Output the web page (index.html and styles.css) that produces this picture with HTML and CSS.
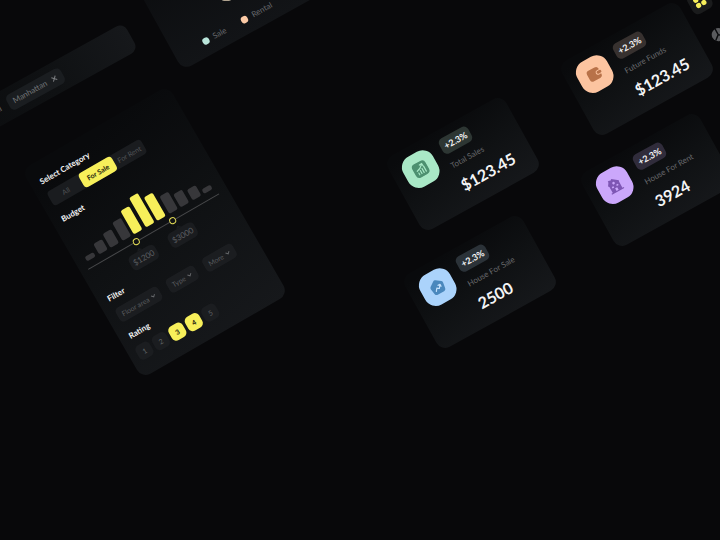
FILE: index.html
```html
<!DOCTYPE html>
<html lang="en">
<head>
<meta charset="utf-8">
<title>Real estate dashboard</title>
<link rel="stylesheet" href="styles.css">
</head>
<body>
<main class="canvas">

  <section class="tile search" aria-label="Locations">
    <span class="search-rest">al</span>
    <button class="chip" type="button">Manhattan
      <svg class="cross" viewBox="0 0 8 8" aria-hidden="true"><path d="M1.5 1.5l5 5M6.5 1.5l-5 5"/></svg>
    </button>
  </section>

  <section class="tile share" aria-label="Sales share">
    <svg class="donut" viewBox="0 0 50 50" aria-hidden="true">
      <circle cx="25" cy="25" r="20" stroke="#b9e5da"/>
      <path d="M5 25A20 20 0 0 0 45 25" stroke="#fbc9a5"/>
    </svg>
    <ul class="legend">
      <li><i class="dot mint"></i>Sale</li>
      <li><i class="dot peach"></i>Rental</li>
    </ul>
  </section>

  <form class="tile filters">
    <section class="group">
      <h2>Select Category</h2>
      <div class="tabs">
        <button type="button">All</button>
        <button type="button" class="on">For Sale</button>
        <button type="button">For Rent</button>
      </div>
    </section>
    <section class="group spaced">
      <h2>Budget</h2>
      <div class="budget">
        <div class="bars">
          <i style="height:5px"></i><i style="height:12px"></i><i style="height:16px"></i><i style="height:21px"></i>
          <i class="on" style="height:27px"></i><i class="on" style="height:34px"></i><i class="on" style="height:27px"></i>
          <i style="height:20px"></i><i style="height:15px"></i><i style="height:12px"></i><i style="height:5px"></i>
        </div>
        <div class="slider">
          <input type="range" aria-label="Lowest price" min="0" max="100" value="36">
          <input type="range" aria-label="Highest price" min="0" max="100" value="65">
        </div>
        <div class="prices"><output>$1200</output><output>$3000</output></div>
      </div>
    </section>
    <section class="group">
      <h2>Filter</h2>
      <div class="selects">
        <select aria-label="Floor area"><option>Floor area</option></select>
        <select aria-label="Type"><option>Type</option></select>
        <select aria-label="More"><option>More</option></select>
      </div>
    </section>
    <section class="group spaced">
      <h2>Rating</h2>
      <div class="rating">
        <button type="button">1</button>
        <button type="button">2</button>
        <button type="button" class="on">3</button>
        <button type="button" class="on">4</button>
        <button type="button">5</button>
      </div>
    </section>
  </form>

  <article class="tile stat sales">
    <div class="badge-icon">
      <svg viewBox="0 0 16 16" aria-hidden="true"><rect x="0.500" y="0.500" width="15" height="15" rx="4" fill="#4d9070"/><path d="M4.500 12.500v-2M7 12.500v-3.500M9.500 12.500v-4.500M12 12.500V7M4 8.200Q8 7.500 11 4.200M8.800 3.800l2.700-.2.200 2.600" fill="none" stroke="#a9e8c6" stroke-width="1.200" stroke-linecap="round"/></svg>
    </div>
    <div class="facts"><span class="delta">+2.3%</span><h3>Total Sales</h3><strong>$123.45</strong></div>
  </article>

  <article class="tile stat for-sale">
    <div class="badge-icon">
      <svg viewBox="0 0 16 16" aria-hidden="true"><path d="M6.600 1a2.200 2.200 0 0 1 2.800 0l4.800 3.500a2.300 2.300 0 0 1 .8 2.200l-1 6a2.500 2.500 0 0 1-2.400 2H4.400a2.500 2.500 0 0 1-2.400-2l-1-6a2.300 2.300 0 0 1 .8-2.200z" fill="#4a88bd"/><path d="M4.800 11l2-2.600 2 1.600 2.400-3.200M9.200 6.600h2.200v2.200" fill="none" stroke="#c4e1fc" stroke-width="1.200" stroke-linecap="round" stroke-linejoin="round"/></svg>
    </div>
    <div class="facts"><span class="delta">+2.3%</span><h3>House For Sale</h3><strong>2500</strong></div>
  </article>

  <article class="tile stat funds">
    <div class="badge-icon">
      <svg viewBox="0 0 16 16" aria-hidden="true"><path d="M4 2h7a3 3 0 0 1 3 3v.6h-2.200a2.400 2.400 0 0 0 0 4.800H14v.6a3 3 0 0 1-3 3H4a3 3 0 0 1-3-3V5a3 3 0 0 1 3-3z" fill="#b87249"/><rect x="10.400" y="6.500" width="5" height="3" rx="1.400" fill="#b87249"/></svg>
    </div>
    <div class="facts"><span class="delta">+2.3%</span><h3>Future Funds</h3><strong>$123.45</strong></div>
  </article>

  <article class="tile stat for-rent">
    <div class="badge-icon">
      <svg viewBox="0 0 16 16" aria-hidden="true"><path d="M2.500 14V7L1.500 6l2.200-3.200V1.500h2v.9L8 1l6 4.800L13.500 7v7h1.500v1.200H1V14z" fill="#7e56b4"/><circle cx="8" cy="5.600" r="1.300" fill="#cba7fb"/><path d="M6.800 14v-3h2.400v3zM4.500 8.300h2v1.500h-2zM9.500 8.300h2v1.500h-2z" fill="#cba7fb"/></svg>
    </div>
    <div class="facts"><span class="delta">+2.3%</span><h3>House For Rent</h3><strong>3924</strong></div>
  </article>

  <nav class="tile side" aria-label="Sections">
    <a href="#home" class="current" aria-label="Home"><svg viewBox="0 0 14 14" aria-hidden="true"><g fill="#f7ef5a"><circle cx="4" cy="4" r="2.600"/><circle cx="10" cy="4" r="2.600"/><circle cx="4" cy="10" r="2.600"/><circle cx="10" cy="10" r="2.600"/></g></svg></a>
    <a href="#reports" aria-label="Reports"><svg viewBox="0 0 14 14" aria-hidden="true"><circle cx="7" cy="7" r="6.500" fill="#5a5b5e"/><path d="M7 .5V7l5 4M7 7l-5 4" fill="none" stroke="#0a0b0d" stroke-width="1.400"/></svg></a>
  </nav>

</main>
</body>
</html>
```
FILE: styles.css
```css
* { box-sizing: border-box; }

body {
  margin: 0;
  background: #08080a;
  color: #f4f4f5;
  font-family: Lato, "Open Sans", sans-serif;
}

h2, h3, ul { margin: 0; padding: 0; font-weight: 400; }
button, select { border: 0; margin: 0; padding: 0; font: inherit; color: inherit; background: none; }
svg { display: block; }

.canvas {
  position: relative;
  min-height: 100vh;
  overflow: hidden;
}

/* Tiles float on the canvas; left and top give each tile's centre. */
.tile {
  position: absolute;
  border-radius: 10px;
  background: linear-gradient(170deg, #090a0c 8%, #0f1113 50%, #16181b 100%);
  transform: translate(-50%, -50%) rotate(-29deg);
}

/* Search */
.search {
  left: 32px;
  top: 91px;
  width: 226px;
  padding: 7px 0 7px 72px;
  display: flex;
  align-items: center;
  gap: 8px;
  font-size: 8px;
  line-height: 17px;
  color: #717376;
  border-radius: 8px;
  background: linear-gradient(90deg, #0a0b0d, #0f1113 60%, #16181b);
}
.chip {
  display: flex;
  align-items: center;
  gap: 5px;
  padding: 0 6px;
  border-radius: 5px;
  background: #1a1d20;
}
.cross { width: 7px; height: 7px; fill: none; stroke: #7c7e81; stroke-width: 1.2; }

/* Share chart */
.share {
  left: 226px;
  top: -25px;
  width: 168px;
  padding: 38px 0 10px 31px;
  background: linear-gradient(180deg, #0a0b0d, #121417);
}
.donut { width: 50px; height: 50px; margin: 0 0 17px 28px; fill: none; stroke-width: 10; }
.legend { display: flex; gap: 18px; list-style: none; font-size: 8px; line-height: 10px; color: #67696c; }
.legend li { display: flex; align-items: center; gap: 5px; }
.dot { width: 7px; height: 7px; border-radius: 3px; }
.mint { background: #b9e5da; }
.peach { background: #fbc9a5; }

/* Filters */
.filters {
  left: 155px;
  top: 232px;
  width: 169px;
  padding: 15px 8px;
  display: flex;
  flex-direction: column;
  gap: 5px;
  transform: translate(-50%, -50%) rotate(-30deg);
}
.group { display: flex; flex-direction: column; align-items: flex-start; gap: 7px; }
.spaced { margin-top: 5px; }
.group h2 { padding-left: 2px; font-size: 8px; line-height: 10px; font-weight: 700; }
.on { color: #25240f; background: #f7ef5a; }

.tabs {
  display: grid;
  grid-template-columns: 36px 38px 34px;
  margin-left: 2px;
  border-radius: 4px;
  background: #1a1c1f;
  color: #515356;
  font-size: 7px;
  line-height: 16px;
}
.tabs .on { border-radius: 4px; background: #f7ef5a; color: #25240f; font-weight: 700; }

.budget { align-self: stretch; }
.bars { display: flex; align-items: flex-end; justify-content: space-between; height: 37px; padding: 0 5px 0 3px; }
.bars i { width: 10px; border-radius: 2px; background: #37373a; }
.bars .on { background: #f7ef5a; }
.slider {
  display: grid;
  margin: 3px 2px 6px 0;
  background: linear-gradient(#47484a, #47484a) center / 100% 1px no-repeat;
}
.slider input {
  grid-area: 1 / 1;
  width: 100%;
  height: 8px;
  margin: 0;
  appearance: none;
  background: none;
  pointer-events: none;
}
.slider input::-webkit-slider-thumb {
  appearance: none;
  width: 7px;
  height: 7px;
  border: 1px solid #e2db55;
  border-radius: 50%;
  background: #111214;
  pointer-events: auto;
}
.prices { display: flex; gap: 15px; padding-left: 39px; }
.prices output {
  position: relative;
  width: 30px;
  border-radius: 5px;
  background: #1a1c1f;
  color: #5d5f62;
  font-size: 8px;
  line-height: 16px;
  text-align: center;
}
.prices output::before {
  content: "";
  position: absolute;
  left: 12px;
  top: -3px;
  border: 3px solid transparent;
  border-top: 0;
  border-bottom-color: #1a1c1f;
}

.selects { display: flex; gap: 9px; padding-left: 2px; }
.selects select {
  appearance: none;
  height: 16px;
  padding: 0 13px 0 5px;
  border-radius: 5px;
  color: #595b5e;
  background: #1b1d20 url("data:image/svg+xml,%3Csvg xmlns='http://www.w3.org/2000/svg' viewBox='0 0 6 6'%3E%3Cpath d='M1 2l2 2 2-2' fill='none' stroke='%23636568'/%3E%3C/svg%3E") right 5px center / 6px 6px no-repeat;
  font-size: 7px;
}

.rating { display: flex; gap: 3px; }
.rating button {
  width: 16px;
  height: 16px;
  border-radius: 5px;
  background: #1b1d20;
  color: #626467;
  font-size: 7px;
  text-align: center;
}
.rating .on { background: #f7ef5a; color: #25240f; font-weight: 700; }

/* Stats */
.stat {
  width: 135px;
  padding: 9px 11px 13px;
  display: flex;
  align-items: flex-start;
  gap: 11px;
}
.badge-icon {
  flex: none;
  display: grid;
  place-items: center;
  width: 34px;
  height: 34px;
  border-radius: 12px;
}
.badge-icon svg { width: 16px; height: 16px; }
.facts { display: flex; flex-direction: column; align-items: flex-start; white-space: nowrap; }
.delta { padding: 0 4px; border-radius: 5px; font-size: 9px; line-height: 17px; font-weight: 700; }
.stat h3 { margin-top: 6px; font-size: 8px; line-height: 12px; color: #66676a; }
.stat strong { margin-top: 7px; font-size: 16px; line-height: 20px; font-weight: 700; }

.sales { left: 463px; top: 164px; }
.sales .badge-icon { background: #a9e8c6; }
.sales .delta { background: #2d3633; }
.for-sale { left: 480px; top: 282px; }
.for-sale .badge-icon { background: #abd3fb; }
.for-sale .delta { background: #2b3238; }
.funds { left: 637px; top: 69px; }
.funds .badge-icon { background: #fcc4a0; }
.funds .delta { background: #37312f; }
.for-rent { left: 657px; top: 180px; }
.for-rent .badge-icon { background: #cba7fb; }
.for-rent .delta { background: #302c3b; }

/* Side navigation */
.side {
  left: 709px;
  top: 18px;
  display: grid;
  gap: 16px;
  background: none;
}
.side a { display: grid; place-items: center; width: 22px; height: 22px; border-radius: 6px; }
.side .current { background: #1a1b1c; }
.side svg { width: 14px; height: 14px; }
```
